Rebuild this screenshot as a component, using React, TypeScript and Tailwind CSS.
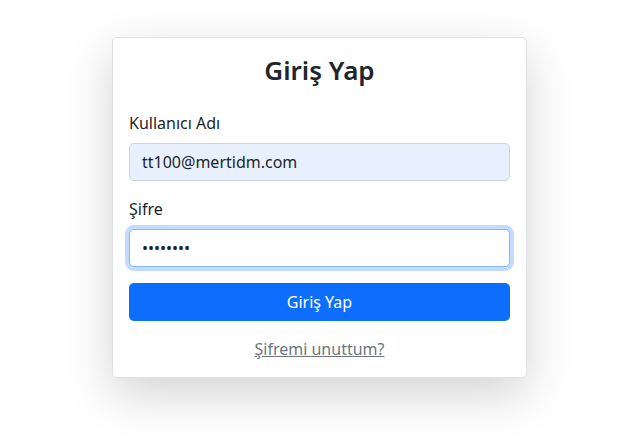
export default function App() {
  return (
    <div
      className="min-h-[442px] bg-white pl-[11px] pt-[37px] flex justify-center items-start"
      style={{ fontFamily: '"Noto Sans", "Open Sans", sans-serif' }}
    >
      <div className="w-[415px] bg-white border border-[#dee2e6] rounded-[5px] shadow-[0_1rem_3rem_rgba(0,0,0,0.175)] px-4 pt-4 pb-4 text-[#212529]">
        <h2 className="text-center text-[26px] leading-[33px] font-semibold mb-6">Giriş Yap</h2>

        <label className="block text-base leading-6 mb-2">Kullanıcı Adı</label>
        <input
          type="text"
          readOnly
          value="tt100@mertidm.com"
          className="block w-full h-[38px] px-3 text-base text-[#212529] bg-[#e8f0fe] border border-[#ced4da] rounded-[5px] outline-none mb-4"
        />

        <label className="block text-base leading-6 mb-2">Şifre</label>
        <input
          type="password"
          readOnly
          value="12345678"
          className="block w-full h-[38px] px-3 text-base text-[#212529] bg-white border border-[#86b7fe] rounded-[5px] outline-none shadow-[0_0_0_4px_rgba(13,110,253,0.25)] mb-4"
        />

        <button className="block w-full h-[38px] bg-[#0d6efd] text-white text-base rounded-[5px]">
          Giriş Yap
        </button>

        <div className="text-center mt-4 leading-6">
          <a href="#" className="text-[#6c757d] underline text-base">
            Şifremi unuttum?
          </a>
        </div>
      </div>
    </div>
  )
}
